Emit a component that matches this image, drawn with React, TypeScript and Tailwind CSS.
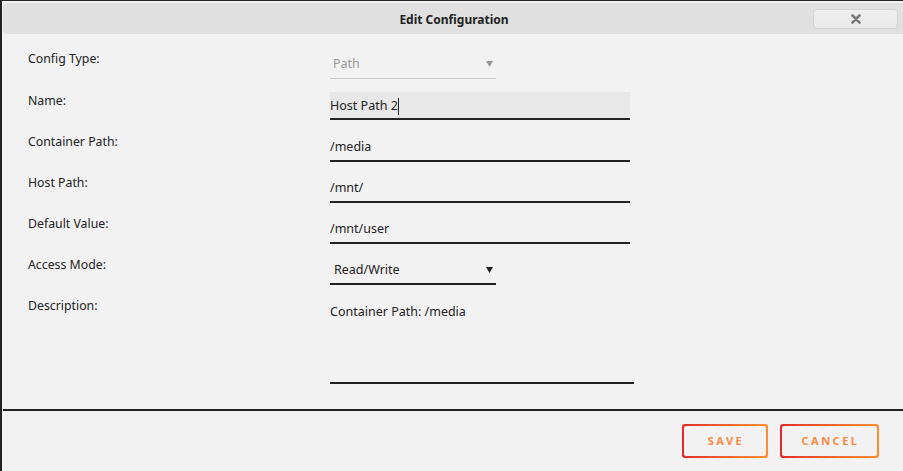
import React from "react";

const font = { fontFamily: '"Noto Sans", "Open Sans", Arial, sans-serif' };

function Label({ children }: { children: React.ReactNode }) {
  return (
    <div className="w-[328px] shrink-0 pl-[26px] text-[12.3px] leading-[20px] text-[#222]">{children}</div>
  );
}

function Arrow({ color }: { color: string }) {
  return (
    <svg width="7" height="6" viewBox="0 0 7 6" className="absolute right-[3px] top-[12px]">
      <path d="M0 0 H7 L3.5 6 Z" fill={color} />
    </svg>
  );
}

export default function App() {
  return (
    <div className="w-[903px] h-[471px] overflow-hidden bg-[#f2f2f2] border-t border-l-2 border-[#222] flex flex-col" style={font}>
      {/* Title bar */}
      <div className="ml-[1px] mt-[2px] h-[31px] bg-[#e0e0e0] rounded-l-[4px] flex items-center relative shrink-0">
        <div className="flex-1 text-center text-[12px] font-bold text-[#222] pl-[2px] pt-[2px]">Edit Configuration</div>
        <div className="absolute left-[810px] top-[6px] w-[85px] h-[20px] rounded-[4px] border border-[#d2d2d2] bg-gradient-to-b from-[#f0f0f0] to-[#e8e8e8] flex items-center justify-center">
          <svg width="10" height="10" viewBox="0 0 10 10">
            <path d="M1.5 1.5 L8.5 8.5 M8.5 1.5 L1.5 8.5" stroke="#7a7a7a" strokeWidth="2.6" strokeLinecap="round" />
          </svg>
        </div>
      </div>

      {/* Form */}
      <div className="flex flex-col mt-[15px]">
        {/* Config Type */}
        <div className="flex h-[42px]">
          <Label>Config Type:</Label>
          <div className="relative w-[166px] h-[30px] border-b border-[#c8c8c8] pt-[5px] pl-[3px] text-[12.5px] leading-[20px] text-[#999]">
            Path
            <Arrow color="#9a9a9a" />
          </div>
        </div>
        {/* Name */}
        <div className="flex h-[41px]">
          <Label>Name:</Label>
          <div className="mt-[1px] w-[300px] h-[28px] bg-[#e8e8e8] border-b-2 border-[#222] pt-[4px] text-[12.5px] leading-[20px] text-[#222] flex">
            <span>Host Path 2</span>
            <span className="inline-block w-[1px] h-[17px] bg-[#222] mt-[2px]" />
          </div>
        </div>
        {[
          ["Container Path:", "/media"],
          ["Host Path:", "/mnt/"],
          ["Default Value:", "/mnt/user"],
        ].map(([l, v]) => (
          <div key={l} className="flex h-[41px]">
            <Label>{l}</Label>
            <div className="w-[300px] h-[30px] border-b-2 border-[#222] pt-[5px] text-[12.5px] leading-[20px] text-[#222]">{v}</div>
          </div>
        ))}
        {/* Access Mode */}
        <div className="flex h-[41px]">
          <Label>Access Mode:</Label>
          <div className="relative w-[166px] h-[30px] border-b-2 border-[#222] pt-[5px] pl-[4px] text-[12.5px] leading-[20px] text-[#222]">
            Read/Write
            <Arrow color="#222" />
          </div>
        </div>
        {/* Description */}
        <div className="flex">
          <Label>Description:</Label>
          <div className="w-[304px] h-[88px] border-b-2 border-[#222] pt-[6px] text-[12.5px] leading-[20px] text-[#222]">
            Container Path: /media
          </div>
        </div>
      </div>

      {/* Separator */}
      <div className="ml-[1px] mt-[25px] border-t-2 border-[#222]" />

      {/* Buttons */}
      <div className="flex justify-end gap-[12px] pr-[24px] mt-[13px]">
        {["SAVE", "CANCEL"].map((t) => (
          <div
            key={t}
            className={`${t === "SAVE" ? "w-[86px]" : "w-[99px]"} h-[34px] rounded-[3px] p-[2px] bg-gradient-to-r from-[#e22828] to-[#ff8c2f]`}
          >
            <div className="w-full h-full rounded-[2px] bg-[#f2f2f2] flex items-center justify-center">
              <span className="text-[11px] font-bold tracking-[2.5px] text-[#f98a45] pl-[2px]">{t}</span>
            </div>
          </div>
        ))}
      </div>
    </div>
  );
}
